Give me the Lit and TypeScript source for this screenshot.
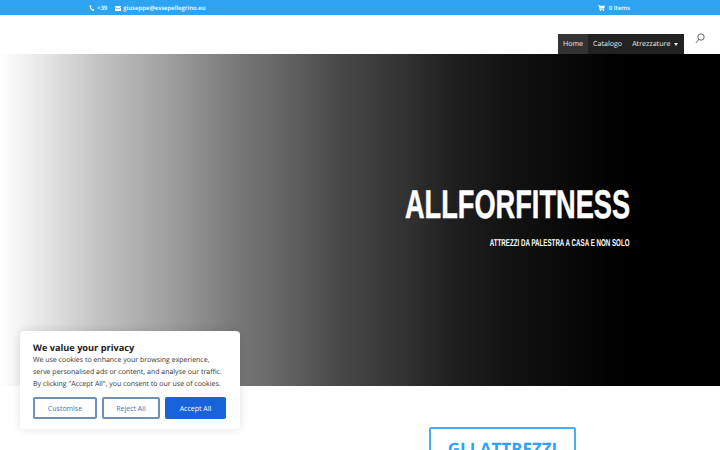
import { LitElement, html, css } from "lit";
import { customElement } from "lit/decorators.js";

@customElement("app-root")
export class AppRoot extends LitElement {
  static styles = css`
    :host { display: block; width: 720px; height: 450px; overflow: hidden; position: relative; background: #fff; font-family: "Open Sans", sans-serif; text-rendering: geometricPrecision; }
    .top { height: 15px; background: #2ea3f2; display: flex; justify-content: space-between; align-items: center; padding: 1px 90px 0 89px; color: #fff; font-size: 6px; font-weight: 600; box-sizing: border-box; }
    .group { display: flex; align-items: center; gap: 2px; }
    .left { gap: 8px; }
    .cart { gap: 4px; }
    .top svg { display: block; }
    .header { height: 39px; display: flex; justify-content: flex-end; align-items: flex-end; padding-right: 15px; gap: 11px; box-sizing: border-box; }
    .nav { height: 20px; background: #222; display: flex; align-items: center; color: #ececec; font-size: 7.1px; width: 126px; box-sizing: border-box; }
    .nav span { display: flex; align-items: center; height: 100%; padding: 0 5px; white-space: nowrap; }
    .nav .active { background: #333; }
    .caret { width: 0; height: 0; border: 2px solid transparent; border-top: 3px solid #eee; border-bottom: 0; margin-left: 4px; }
    .search { align-self: flex-start; margin-top: 18px; }
    .hero { height: 332px; background: linear-gradient(90deg, #fff 0, #ececec 33px, #c2c2c2 100px, #a0a0a0 167px, #7a7a7a 233px, #5c5c5c 300px, #484848 340px, #343434 400px, #202020 450px, #141414 500px, #0c0c0c 550px, #040404 600px, #000 620px); display: flex; flex-direction: column; align-items: flex-end; padding: 126px 90px 0 0; box-sizing: border-box; color: #fff; }
    h1 { margin: 0; font-family: "Liberation Sans", sans-serif; font-weight: 700; font-size: 40px; line-height: 50px; white-space: nowrap; transform: scaleX(.68); transform-origin: right center; -webkit-text-stroke: .5px #fff; }
    .sub { margin-top: 7px; font-family: "Liberation Sans", sans-serif; font-weight: 700; font-size: 10px; line-height: 14px; white-space: nowrap; transform: scaleX(.62); transform-origin: right center; }
    .below { display: flex; justify-content: flex-end; padding: 41px 144px 0 0; }
    .btn-out { width: 147px; height: 60px; border: 2px solid #4aaef3; border-radius: 2px; box-sizing: border-box; color: #2ea3f2; font-size: 17px; font-weight: 700; text-align: center; padding-top: 5px; line-height: 30px; white-space: nowrap; }
    .cookie { position: absolute; left: 20px; top: 331px; width: 220px; height: 98px; background: #fff; border-radius: 4px; box-shadow: 0 0 10px rgba(0,0,0,.12); padding: 10px 13px 0; box-sizing: border-box; }
    .cookie h2 { margin: 0; font-size: 9.2px; line-height: 14px; font-weight: 700; color: #212121; }
    .cookie p { margin: 0; font-size: 7px; line-height: 12px; color: #333; white-space: nowrap; }
    .btns { display: flex; gap: 5px; margin-top: 6px; }
    .btns button { font-family: inherit; font-size: 7px; height: 22px; border-radius: 2px; border: 2px solid #6f8fb5; background: #fff; color: #3f73c4; padding: 0; font-weight: 500; box-sizing: border-box; }
    .btns .a { width: 64px; }
    .btns .b { width: 58px; }
    .btns .c { width: 61px; background: #1863dc; color: #fff; border-color: #1863dc; }
  `;
  render() {
    return html`
      <div class="top">
        <div class="group left">
          <div class="group">
            <svg width="6" height="7" viewBox="0 0 6 7"><path d="M.6.6 1.8.2l.8 1.5-.7.6c.2.8.7 1.5 1.4 2l.8-.5 1.3 1-.6 1.3C2.6 6 .5 3.3.6.6Z" fill="#fff"/></svg>
            <span>+39</span>
          </div>
          <div class="group">
            <svg width="6" height="5" viewBox="0 0 6 5"><path d="M0 0h6v1L3 2.8 0 1Zm0 1.8 3 1.8 3-1.8V5H0Z" fill="#fff"/></svg>
            <span>giuseppe@essepellegrino.eu</span>
          </div>
        </div>
        <div class="group cart">
          <svg width="7" height="6" viewBox="0 0 7 6"><path d="M0 0h1.3l.3.8H7L6.2 3.6H2.2l.2.7h3.8v.6H1.8L.8.8H0Z" fill="#fff"/><circle cx="2.4" cy="5.4" r=".6" fill="#fff"/><circle cx="5.4" cy="5.4" r=".6" fill="#fff"/></svg>
          <span>0 Items</span>
        </div>
      </div>
      <div class="header">
        <div class="nav">
          <span class="active">Home</span>
          <span>Catalogo</span>
          <span>Atrezzature<i class="caret"></i></span>
        </div>
        <svg class="search" width="10" height="11" viewBox="0 0 10 11" fill="none" stroke="#555" stroke-width=".9"><circle cx="6" cy="4" r="3.2"/><path d="M3.8 6.4 1 9.8"/></svg>
      </div>
      <div class="hero">
        <h1>ALLFORFITNESS</h1>
        <div class="sub">ATTREZZI DA PALESTRA A CASA E NON SOLO</div>
      </div>
      <div class="below"><div class="btn-out">GLI ATTREZZI</div></div>
      <div class="cookie">
        <h2>We value your privacy</h2>
        <p>We use cookies to enhance your browsing experience,</p>
        <p>serve personalised ads or content, and analyse our traffic.</p>
        <p>By clicking "Accept All", you consent to our use of cookies.</p>
        <div class="btns">
          <button class="a">Customise</button>
          <button class="b">Reject All</button>
          <button class="c">Accept All</button>
        </div>
      </div>
    `;
  }
}
